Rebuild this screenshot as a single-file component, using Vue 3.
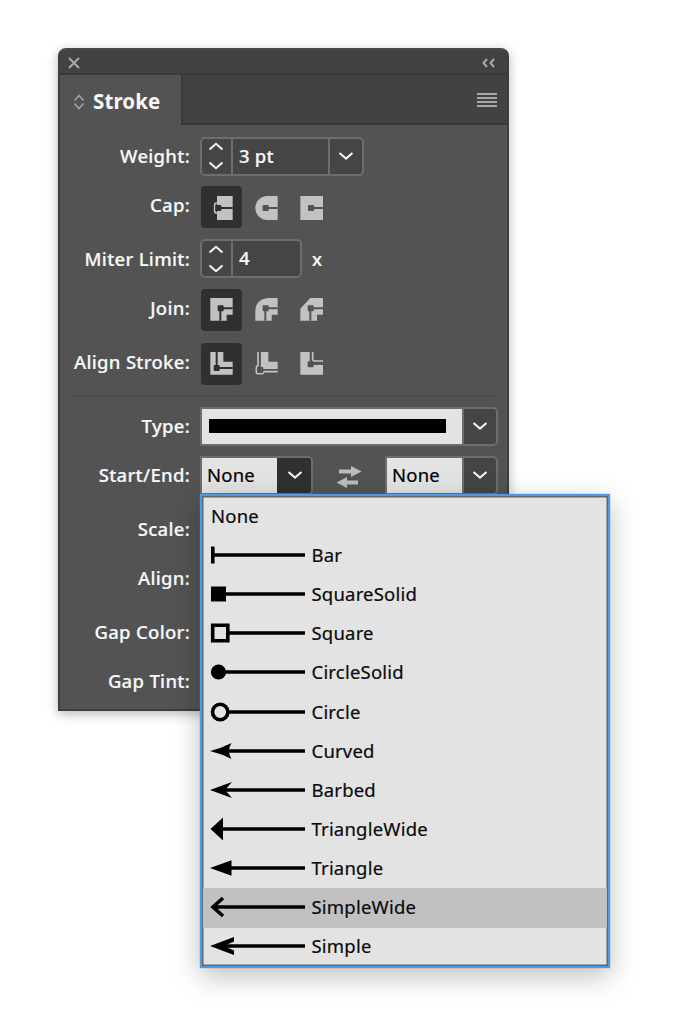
<script setup>
const options = ['None', 'Bar', 'SquareSolid', 'Square', 'CircleSolid', 'Circle', 'Curved', 'Barbed', 'TriangleWide', 'Triangle', 'SimpleWide', 'Simple']
const groups = { cap: ['butt', 'round', 'project'], join: ['miter', 'rounded', 'bevel'], align: ['center', 'inside', 'outside'] }
const solid = {
  butt: 'M48 30H95V102H48Z',
  round: 'M95 30H64A36 36 0 0 0 64 102H95Z',
  project: 'M28 30H96V102H28Z',
  miter: 'M28 27H95V77H77V95H28Z',
  rounded: 'M95 27H68Q28 30 28 68V95H77V77H95Z',
  bevel: 'M58 27H96V77H78V95H28V59Z',
  center: 'M28 27H67V56H95V95H28Z',
  inside: 'M44 27H67V56H95V78H44Z',
  outside: 'M28 27H58V65H96V95H28Z'
}
const cuts = {
  butt: 'M55 66H95',
  round: 'M60 66H95',
  project: 'M60 66H96',
  miter: 'M58 95V58H95',
  rounded: 'M58 95V58H95',
  bevel: 'M58 95V58H96',
  center: 'M47 27V75H95',
  inside: 'M41 27V81H95',
  outside: 'M59 27V62H96'
}
const light = {
  butt: 'M50 51H46Q41 51 41 57V75Q41 81 46 81H50',
  inside: 'M36 27V68Q31 69 31 75V86Q31 92 37 92H48Q53 92 54 86H95',
  outside: 'M65 27V48Q65 54 71 54H96'
}
const nodes = {
  butt: [43, 57], round: [50, 57], project: [51, 57],
  miter: [50, 49], rounded: [50, 49], bevel: [50, 49],
  center: [38, 66], inside: [34, 72], outside: [50, 55]
}
</script>

<template>
  <main class="stage">
    <section class="panel">
      <header class="titlebar">
        <svg class="close" width="12" height="12" viewBox="0 0 12 12"><path d="M1 1L11 11M11 1L1 11" /></svg>
        <svg class="collapse" width="13" height="10" viewBox="0 0 13 10"><path d="M5 1L1.500 5L5 9M12 1L8.500 5L12 9" /></svg>
      </header>
      <div class="tabs">
        <div class="tab">
          <svg class="sort" width="12" height="16" viewBox="0 0 12 16"><path d="M1.500 6.500L6 1.500L10.500 6.500M1.500 9.500L6 14.500L10.500 9.500" /></svg>
          <span>Stroke</span>
        </div>
        <div class="menu-icon"><i v-for="n in 4" :key="n"></i></div>
      </div>

      <div class="body">
        <div class="row r-weight">
          <label>Weight:</label>
          <div class="field weight">
            <span class="step"><svg width="16" height="28" viewBox="0 0 16 28"><path d="M1.500 7.500L8 1.800L14.500 7.500M1.500 20.500L8 26.200L14.500 20.500" /></svg></span>
            <span class="value">3 pt</span>
            <span class="drop"><svg width="16" height="10" viewBox="0 0 16 10"><path d="M1.500 2L8 7.500L14.500 2" /></svg></span>
          </div>
        </div>
        <div class="row r-cap">
          <label class="up">Cap:</label>
          <div class="buttons">
            <span v-for="(name, i) in groups.cap" :key="name" class="icon" :class="{ on: i === 0 }">
              <svg viewBox="0 0 123 123"><path class="solid" :d="solid[name]" /><path class="cut" :d="cuts[name]" /><path v-if="light[name]" class="light" :d="light[name]" /><rect class="node" :x="nodes[name][0]" :y="nodes[name][1]" width="18" height="18" rx="3" /></svg>
            </span>
          </div>
        </div>
        <div class="row r-miter">
          <label>Miter Limit:</label>
          <div class="field miter">
            <span class="step"><svg width="16" height="28" viewBox="0 0 16 28"><path d="M1.500 7.500L8 1.800L14.500 7.500M1.500 20.500L8 26.200L14.500 20.500" /></svg></span>
            <span class="value">4</span>
          </div>
          <span class="unit">x</span>
        </div>
        <div v-for="row in [['join', 'Join:'], ['align', 'Align Stroke:']]" :key="row[0]" class="row" :class="'r-' + row[0]">
          <label class="up">{{ row[1] }}</label>
          <div class="buttons">
            <span v-for="(name, i) in groups[row[0]]" :key="name" class="icon" :class="{ on: i === 0 }">
              <svg viewBox="0 0 123 123"><path class="solid" :d="solid[name]" /><path class="cut" :d="cuts[name]" /><path v-if="light[name]" class="light" :d="light[name]" /><rect class="node" :x="nodes[name][0]" :y="nodes[name][1]" width="18" height="18" rx="3" /></svg>
            </span>
          </div>
        </div>
        <hr>
        <div class="row r-type">
          <label>Type:</label>
          <div class="field type">
            <span class="pick"><b class="bar"></b></span>
            <span class="drop"><svg width="16" height="10" viewBox="0 0 16 10"><path d="M1.500 2L8 7.500L14.500 2" /></svg></span>
          </div>
        </div>
        <div class="row r-ends">
          <label>Start/End:</label>
          <div class="field end">
            <span class="pick">None</span>
            <span class="drop open"><svg width="16" height="10" viewBox="0 0 16 10"><path d="M1.500 2L8 7.500L14.500 2" /></svg></span>
          </div>
          <svg class="swap" width="26" height="24" viewBox="0 0 26 24"><path d="M3 4.500H15V1L25.500 6.500L15 12V8.500H3ZM22 15.500H11V12L0.500 17.500L11 23V19.500H22Z" /></svg>
          <div class="field end">
            <span class="pick">None</span>
            <span class="drop"><svg width="16" height="10" viewBox="0 0 16 10"><path d="M1.500 2L8 7.500L14.500 2" /></svg></span>
          </div>
        </div>
        <div class="row r-scale"><label>Scale:</label></div>
        <div class="row r-aln"><label>Align:</label></div>
        <div class="row r-color"><label>Gap Color:</label></div>
        <div class="row r-tint"><label>Gap Tint:</label></div>
      </div>
    </section>

    <ul class="popup">
      <li v-for="name in options" :key="name" :class="{ active: name === 'SimpleWide', first: name === 'None' }">
        <svg v-if="name !== 'None'" width="95" height="26" viewBox="0 0 95 26">
          <path v-if="name === 'Bar'" class="ln" d="M3 13H96M2.800 4.500V21.500" />
          <template v-else-if="name === 'SquareSolid'"><path class="ln" d="M10 13H96" /><path d="M1 5.500H16V20.500H1Z" /></template>
          <template v-else-if="name === 'Square'"><path class="ln" d="M19 13H96M2.700 5.200H17.800V20.800H2.700Z" /></template>
          <template v-else-if="name === 'CircleSolid'"><path class="ln" d="M10 13H96" /><circle cx="8.500" cy="13" r="7.600" /></template>
          <template v-else-if="name === 'Circle'"><path class="ln" d="M19 13H96" /><circle class="ln" cx="10.200" cy="13" r="7.700" /></template>
          <template v-else-if="name === 'Curved'"><path class="ln" d="M15 13H96" /><path d="M0 13Q12 10 21.500 5Q16.500 13 21.500 21Q12 16 0 13Z" /></template>
          <template v-else-if="name === 'Barbed'"><path class="ln" d="M12 13H96" /><path d="M0 13L22 5L15 13L22 21Z" /></template>
          <template v-else-if="name === 'TriangleWide'"><path class="ln" d="M10 13H96" /><path d="M0.500 13L13 1.500V24.500Z" /></template>
          <template v-else-if="name === 'Triangle'"><path class="ln" d="M15 13H96" /><path d="M0 13L21.500 5.300V20.700Z" /></template>
          <template v-else-if="name === 'SimpleWide'"><path class="ln" d="M4 13H96M13 4L3 13L13 22" /></template>
          <template v-else><path class="ln" d="M12 13H96" /><path d="M0 13L24 4V8.500L14 13L24 17.500V22Z" /></template>
        </svg>
        <span>{{ name }}</span>
      </li>
    </ul>
  </main>
</template>

<style>
body { margin: 0; background: #fff; }
</style>

<style scoped>
* { box-sizing: border-box; }
.stage { position: relative; width: 694px; height: 1024px; padding: 48px 0 0 58px; overflow: hidden; background: #fff; font: 500 18.5px/24px "Noto Sans", sans-serif; letter-spacing: .2px; color: #f8f8f8; }
svg { display: block; fill: none; flex: none; }
.panel { width: 451px; height: 663px; border: 2px solid #3e3e3e; border-top-color: #4a4a4a; border-radius: 8px 8px 0 0; background: #535353; box-shadow: 0 3px 12px rgba(0, 0, 0, .28); overflow: hidden; }
.titlebar { height: 25px; padding: 0 12px 0 8px; display: flex; align-items: center; justify-content: space-between; background: #424242; border-bottom: 2px solid #393939; }
.close { stroke: #aaa; stroke-width: 2; margin-top: 3px; }
.collapse { stroke: #aaa; stroke-width: 2; margin-top: 2px; }
.tabs { height: 50px; display: flex; align-items: stretch; justify-content: space-between; background: #424242; }
.tab { width: 123px; padding: 1px 0 0 13px; display: flex; align-items: center; gap: 8px; background: #535353; border-right: 2px solid #393939; font-weight: 700; font-size: 20.5px; letter-spacing: .1px; }
.sort { stroke: #a2a2a2; stroke-width: 1.6; margin-top: 2px; }
.menu-icon { flex: 1; border-bottom: 2px solid #393939; display: flex; flex-direction: column; align-items: flex-end; justify-content: center; gap: 2px; padding: 2px 10px 0 0; }
.menu-icon i { display: block; width: 20px; height: 2px; background: #a8a8a8; }
.body { padding-top: 5px; }
.row { display: flex; align-items: center; }
.row label { width: 130px; text-align: right; margin-right: 10px; white-space: nowrap; letter-spacing: .3px; -webkit-text-stroke: .2px #f8f8f8; }
.row label.up { position: relative; top: -2px; }
.r-weight { height: 52px; } .r-cap { height: 50px; } .r-miter { height: 53px; } .r-join { height: 50px; } .r-align { height: 58px; }
.r-type { height: 50px; } .r-ends { height: 48px; } .r-scale { height: 60px; } .r-aln { height: 38px; } .r-color { height: 70px; } .r-tint { height: 28px; }
hr { height: 2px; margin: 2px 10px 4px; border: 0; background: #4c4c4c; }
.field { height: 39px; display: flex; background: #454545; border: 2px solid #6d6d6d; border-radius: 5px; overflow: hidden; }
.weight { width: 164px; } .miter { width: 102px; } .type { width: 298px; } .end { width: 113px; }
.step { width: 31px; padding-right: 2px; display: flex; align-items: center; justify-content: center; border-right: 2px solid #6d6d6d; }
.step svg, .drop svg { stroke: #f4f4f4; stroke-width: 2.1; }
.value { flex: 1; padding-left: 6px; line-height: 34px; -webkit-text-stroke: .2px #f8f8f8; }
.drop { width: 34px; display: flex; align-items: center; justify-content: center; border-left: 2px solid #6d6d6d; }
.drop.open { background: #303030; border-left-color: #303030; }
.unit { margin-left: 10px; -webkit-text-stroke: .2px #f8f8f8; }
.type, .end { border-top-left-radius: 0; border-bottom-left-radius: 0; }
.pick { flex: 1; display: flex; align-items: center; padding: 0 0 1px 5px; background: #e3e3e3; color: #000; font-weight: 400; -webkit-text-stroke: .2px #000; }
.bar { width: 237px; height: 14px; background: #000; margin-left: 2px; }
.swap { margin: 4px 23px 0 23px; fill: #bcbcbc; }
.buttons { display: flex; gap: 4px; padding: 0 0 .5px 1.4px; }
.icon { --bg: #535353; width: 41px; height: 41.5px; border-radius: 4px; background: var(--bg); }
.icon.on { --bg: #303030; }
.icon svg { width: 41px; height: 41px; }
.solid { fill: #c2c2c2; }
.cut { stroke: var(--bg); stroke-width: 6; }
.light { stroke: #c2c2c2; stroke-width: 5; }
.node { fill: var(--bg); }
.popup { position: absolute; left: 200px; top: 494px; width: 410px; height: 474px; margin: 0; padding: 0; list-style: none; border: 2px solid #479be9; box-shadow: inset 0 0 0 1.5px #666, 0 8px 26px rgba(0, 0, 0, .26), 0 0 1px #888; background: #e3e3e3; color: #0b0b0b; padding: 1px; font-weight: 400; overflow: hidden; }
.popup li { height: 39.15px; display: flex; align-items: center; gap: 6.500px; padding: 0 0 1.5px 7px; -webkit-text-stroke: .2px #0b0b0b; }
.popup li.first { padding-left: 8px; }
.popup li.active { background: #c1c1c1; }
.popup svg { fill: #000; }
.popup .ln { fill: none; stroke: #000; stroke-width: 3.6; }
</style>
